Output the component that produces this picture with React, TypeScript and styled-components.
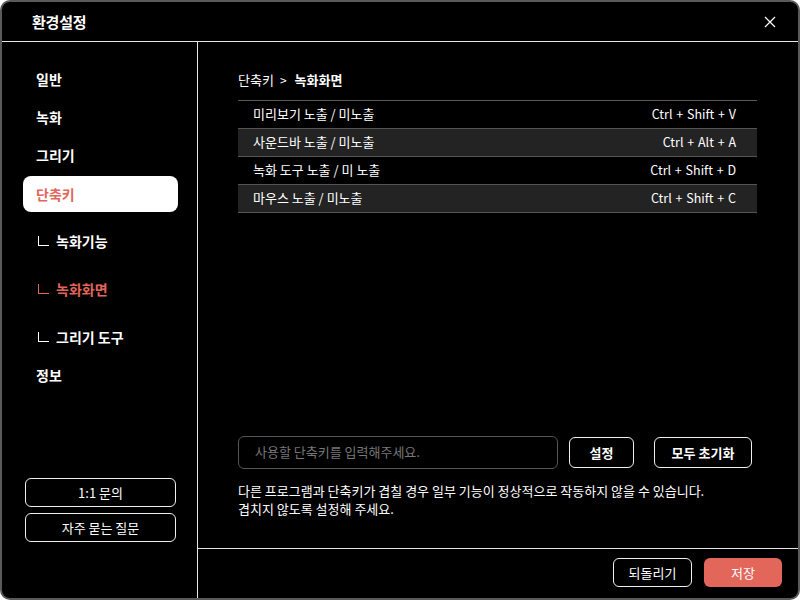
import * as React from 'react';
import styled, { createGlobalStyle } from 'styled-components';

const ACCENT = '#e3665b';
const FONT = '"Noto Sans CJK KR", "Noto Sans", "Liberation Sans", sans-serif';

const GlobalStyle = createGlobalStyle`
  html, body {
    margin: 0;
    padding: 0;
    background: #ffffff;
  }
  * {
    box-sizing: border-box;
  }
`;

const Window = styled.div`
  width: 800px;
  height: 600px;
  display: flex;
  flex-direction: column;
  background: #000;
  border: 2px solid #5a5a5a;
  border-radius: 10px;
  overflow: hidden;
  color: #fff;
  font-family: ${FONT};
`;

const Header = styled.header`
  flex: none;
  height: 40px;
  display: flex;
  align-items: center;
  justify-content: space-between;
  padding: 0 20px 0 30px;
  border-bottom: 1px solid #e6e6e6;
`;

const Title = styled.h1`
  margin: 0;
  font-size: 15px;
  font-weight: 700;
  letter-spacing: -0.2px;
`;

const CloseButton = styled.button`
  width: 16px;
  height: 16px;
  padding: 0;
  border: none;
  background: none;
  display: flex;
  align-items: center;
  justify-content: center;
  cursor: pointer;
`;

const Body = styled.div`
  flex: 1;
  display: flex;
  min-height: 0;
`;

const Sidebar = styled.nav`
  flex: none;
  width: 196px;
  display: flex;
  flex-direction: column;
  border-right: 1px solid #e6e6e6;
  padding: 18px 0 56px;
`;

const NavItem = styled.div<{ $active?: boolean; $current?: boolean; $sub?: boolean }>`
  height: ${(p) => (p.$active ? 36 : 38)}px;
  margin: ${(p) => (p.$active ? '2px 19px 0 21px' : p.$sub ? '10px 0 0 21px' : '0 0 0 21px')};
  padding: 0 0 1px 13px;
  display: flex;
  align-items: center;
  font-size: 14px;
  font-weight: 700;
  color: ${(p) => (p.$active || p.$current ? ACCENT : '#fff')};
  background: ${(p) => (p.$active ? '#fff' : 'transparent')};
  border-radius: 8px;
`;

/* tree branch mark in front of the sub-menu entries */
const Branch = styled.span`
  width: 11px;
  height: 10px;
  margin: 0 7px 0 2px;
  border-left: 1.5px solid currentColor;
  border-bottom: 1.5px solid currentColor;
`;

const HelpLinks = styled.div`
  margin-top: auto;
  display: flex;
  flex-direction: column;
  gap: 6px;
  padding: 0 21px 0 23px;
`;

const OutlineButton = styled.button<{ $width?: number; $bold?: boolean; $height?: number }>`
  width: ${(p) => (p.$width ? `${p.$width}px` : '100%')};
  height: ${(p) => p.$height ?? 29}px;
  flex: none;
  background: #000;
  color: #fff;
  border: 1px solid #f0f0f0;
  border-radius: 6px;
  font-family: ${FONT};
  font-size: 13px;
  font-weight: ${(p) => (p.$bold ? 700 : 400)};
  cursor: pointer;
`;

const PrimaryButton = styled.button`
  width: 78px;
  height: 29px;
  background: ${ACCENT};
  color: #fff;
  border: none;
  border-radius: 6px;
  font-family: ${FONT};
  font-size: 13px;
  cursor: pointer;
`;

const Main = styled.section`
  flex: 1;
  display: flex;
  flex-direction: column;
  min-width: 0;
`;

const Content = styled.div`
  flex: 1;
  display: flex;
  flex-direction: column;
  padding: 29px 41px 30px 40px;
`;

const Breadcrumb = styled.div`
  display: flex;
  align-items: center;
  font-size: 13px;
  line-height: 18px;
  margin-bottom: 11px;

  strong {
    font-weight: 700;
  }
`;

const Separator = styled.span`
  margin: 0 8px 0 6px;
  font-size: 12px;
`;

const ShortcutTable = styled.div`
  border-top: 1px solid #5a5a5a;
`;

const ShortcutRow = styled.div<{ $shaded: boolean }>`
  height: 28px;
  display: flex;
  align-items: center;
  justify-content: space-between;
  padding: 0 21px 3px 15px;
  font-size: 13px;
  background: ${(p) => (p.$shaded ? '#232323' : 'transparent')};
  border-bottom: 1px solid #555;
`;

const Keys = styled.span`
  font-size: 12.5px;
  word-spacing: 1px;
`;

const InputRow = styled.div`
  margin-top: auto;
  display: flex;
  align-items: center;
`;

const KeyInput = styled.input`
  width: 320px;
  height: 33px;
  margin-right: 11px;
  padding: 0 16px 2px;
  background: #000;
  border: 1px solid #555;
  border-radius: 6px;
  color: #fff;
  font-family: ${FONT};
  font-size: 13px;
  outline: none;

  &::placeholder {
    color: #777;
  }
`;

const Notice = styled.p`
  margin: 13px 0 0;
  font-size: 13px;
  line-height: 18px;
`;

const Footer = styled.footer`
  flex: none;
  height: 50px;
  display: flex;
  align-items: center;
  justify-content: flex-end;
  gap: 12px;
  padding: 0 16px 2px 0;
  border-top: 1px solid #e6e6e6;
`;

const shortcuts = [
  { label: '미리보기 노출 / 미노출', keys: 'Ctrl + Shift + V' },
  { label: '사운드바 노출 / 미노출', keys: 'Ctrl + Alt + A' },
  { label: '녹화 도구 노출 / 미 노출', keys: 'Ctrl + Shift + D' },
  { label: '마우스 노출 / 미노출', keys: 'Ctrl + Shift + C' },
];

const CloseIcon = () => (
  <svg width="12" height="12" viewBox="0 0 12 12">
    <path d="M1 1 L11 11 M11 1 L1 11" stroke="#fff" strokeWidth="1.2" fill="none" />
  </svg>
);

export default function App() {
  return (
    <>
      <GlobalStyle />
      <Window>
        <Header>
          <Title>환경설정</Title>
          <CloseButton aria-label="닫기">
            <CloseIcon />
          </CloseButton>
        </Header>
        <Body>
          <Sidebar>
            <NavItem>일반</NavItem>
            <NavItem>녹화</NavItem>
            <NavItem>그리기</NavItem>
            <NavItem $active>단축키</NavItem>
            <NavItem $sub>
              <Branch />
              녹화기능
            </NavItem>
            <NavItem $sub $current>
              <Branch />
              녹화화면
            </NavItem>
            <NavItem $sub>
              <Branch />
              그리기 도구
            </NavItem>
            <NavItem>정보</NavItem>
            <HelpLinks>
              <OutlineButton>1:1 문의</OutlineButton>
              <OutlineButton>자주 묻는 질문</OutlineButton>
            </HelpLinks>
          </Sidebar>
          <Main>
            <Content>
              <Breadcrumb>
                <span>단축키</span>
                <Separator>&gt;</Separator>
                <strong>녹화화면</strong>
              </Breadcrumb>
              <ShortcutTable>
                {shortcuts.map((s, i) => (
                  <ShortcutRow key={s.label} $shaded={i % 2 === 1}>
                    <span>{s.label}</span>
                    <Keys>{s.keys}</Keys>
                  </ShortcutRow>
                ))}
              </ShortcutTable>
              <InputRow>
                <KeyInput placeholder="사용할 단축키를 입력해주세요." />
                <OutlineButton $width={65} $height={31} $bold>
                  설정
                </OutlineButton>
                <OutlineButton $width={98} $height={31} $bold style={{ marginLeft: 20 }}>
                  모두 초기화
                </OutlineButton>
              </InputRow>
              <Notice>
                다른 프로그램과 단축키가 겹칠 경우 일부 기능이 정상적으로 작동하지 않을 수 있습니다.
                <br />
                겹치지 않도록 설정해 주세요.
              </Notice>
            </Content>
            <Footer>
              <OutlineButton $width={79}>되돌리기</OutlineButton>
              <PrimaryButton>저장</PrimaryButton>
            </Footer>
          </Main>
        </Body>
      </Window>
    </>
  );
}
